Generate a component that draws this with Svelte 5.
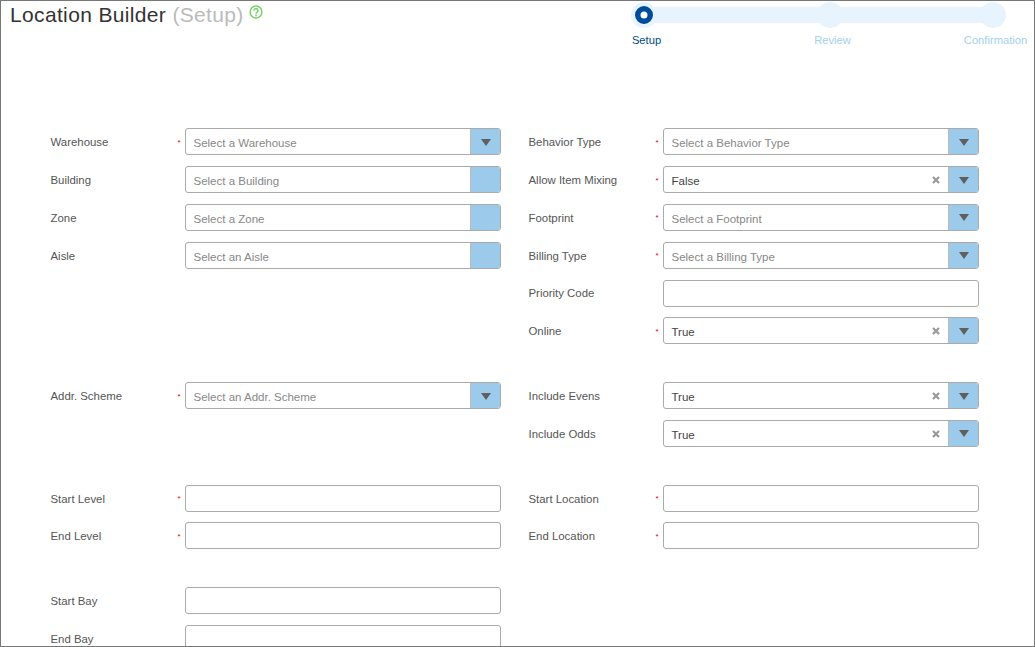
<script>
  const sections = [
    {
      left: [
        { label: 'Warehouse', req: true, type: 'select', ph: 'Select a Warehouse', arrow: true },
        { label: 'Building', type: 'select', ph: 'Select a Building' },
        { label: 'Zone', type: 'select', ph: 'Select a Zone' },
        { label: 'Aisle', type: 'select', ph: 'Select an Aisle' }
      ],
      right: [
        { label: 'Behavior Type', req: true, type: 'select', ph: 'Select a Behavior Type', arrow: true },
        { label: 'Allow Item Mixing', req: true, type: 'select', value: 'False', arrow: true },
        { label: 'Footprint', req: true, type: 'select', ph: 'Select a Footprint', arrow: true },
        { label: 'Billing Type', req: true, type: 'select', ph: 'Select a Billing Type', arrow: true },
        { label: 'Priority Code', type: 'input' },
        { label: 'Online', req: true, type: 'select', value: 'True', arrow: true }
      ]
    },
    {
      left: [{ label: 'Addr. Scheme', req: true, type: 'select', ph: 'Select an Addr. Scheme', arrow: true }],
      right: [
        { label: 'Include Evens', type: 'select', value: 'True', arrow: true },
        { label: 'Include Odds', type: 'select', value: 'True', arrow: true }
      ]
    },
    {
      left: [
        { label: 'Start Level', req: true, type: 'input' },
        { label: 'End Level', req: true, type: 'input' }
      ],
      right: [
        { label: 'Start Location', req: true, type: 'input' },
        { label: 'End Location', req: true, type: 'input' }
      ]
    },
    {
      left: [
        { label: 'Start Bay', type: 'input' },
        { label: 'End Bay', type: 'input' }
      ],
      right: []
    }
  ];
</script>

{#snippet field(f)}
  <div class="field">
    <span class="label">{f.label}</span>
    <span class="req">{f.req ? '*' : ''}</span>
    <div class="control">
      {#if f.type === 'select'}
        <span class="text" class:ph={!f.value}>{f.value ?? f.ph}</span>
        {#if f.value}
          <svg class="clear" width="8" height="8" viewBox="0 0 8 8"><path d="M1 1 7 7M7 1 1 7" /></svg>
        {/if}
        <span class="btn">
          {#if f.arrow}<span class="arrow"></span>{/if}
        </span>
      {/if}
    </div>
  </div>
{/snippet}

<div class="window">
  <header class="top">
    <h1 class="title">
      Location Builder <span class="sub">(Setup)</span>
      <svg class="help" width="14" height="14" viewBox="0 0 14 14">
        <circle cx="7" cy="7" r="5.9" />
        <path d="M5 5.6a2 2 0 1 1 3.1 1.6c-.8.5-1.1.8-1.1 1.5" />
        <circle class="dot" cx="7" cy="10.4" r=".9" />
      </svg>
    </h1>
    <div class="stepper">
      <div class="track"></div>
      <div class="step first">
        <span class="node">
          <svg class="ring" width="18" height="18" viewBox="0 0 18 18"><circle cx="9" cy="9" r="6.25" /></svg>
        </span>
        <span class="name active">Setup</span>
      </div>
      <div class="step second">
        <span class="node"></span>
        <span class="name">Review</span>
      </div>
      <div class="step third">
        <span class="node"></span>
        <span class="name">Confirmation</span>
      </div>
    </div>
  </header>

  <main class="form">
    {#each sections as s}
      <section class="section">
        <div class="col">
          {#each s.left as f}{@render field(f)}{/each}
        </div>
        <div class="col">
          {#each s.right as f}{@render field(f)}{/each}
        </div>
      </section>
    {/each}
  </main>
</div>

<style>
  :global(body) {
    margin: 0;
    background: #fff;
    font-family: "Liberation Sans", Arial, sans-serif;
  }
  .window {
    box-sizing: border-box;
    width: 1035px;
    height: 647px;
    border: 1px solid #777;
    overflow: hidden;
    background: #fff;
  }
  .top {
    display: flex;
    justify-content: space-between;
    align-items: flex-start;
    height: 127.32px;
    padding: 0 0 0 9px;
    box-sizing: border-box;
  }
  .title {
    margin: 1px 0 0;
    font-size: 21px;
    line-height: 26px;
    font-weight: 400;
    color: #333;
    letter-spacing: 0.35px;
    white-space: nowrap;
  }
  .sub {
    color: #bbb;
  }
  .help {
    vertical-align: 3px;
    margin-left: -1px;
    fill: none;
    stroke: #7ad06a;
    stroke-width: 1.5;
  }
  .help .dot {
    fill: #7ad06a;
    stroke: none;
  }
  .stepper {
    position: relative;
    display: grid;
    grid-template-columns: 186px 163px 26px;
    margin-right: 28px;
  }
  .track {
    position: absolute;
    left: 13px;
    right: 13px;
    top: 6px;
    height: 16px;
    background: #e8f4fd;
  }
  .step {
    position: relative;
    width: 26px;
    display: flex;
    flex-direction: column;
    align-items: center;
  }
  .node {
    display: flex;
    align-items: center;
    justify-content: center;
    width: 26px;
    height: 26px;
    margin-top: 1px;
    border-radius: 50%;
    background: #e8f4fd;
  }
  .ring {
    fill: #fff;
    stroke: #004b9b;
    stroke-width: 5.5;
  }
  .name {
    margin-top: 5px;
    padding-left: 5px;
    font-size: 11.2px;
    line-height: 14px;
    color: #a3cff0;
    white-space: nowrap;
  }
  .name.active {
    color: #004b87;
  }
  .form {
    display: flex;
    flex-direction: column;
    gap: 37.765px;
    padding-left: 49.5px;
  }
  .section {
    display: grid;
    grid-template-columns: 451px 451px;
    gap: 27px;
  }
  .col {
    display: flex;
    flex-direction: column;
    gap: 10.8px;
  }
  .field {
    display: flex;
    align-items: center;
    height: 27px;
  }
  .label {
    width: 125.5px;
    font-size: 11.4px;
    padding-top: 0.88px;
    color: #555;
    white-space: nowrap;
  }
  .req {
    width: 9px;
    padding: 2px 0 0 1.5px;
    box-sizing: border-box;
    color: #e00;
    font-size: 8px;
    line-height: 10px;
  }
  .control {
    box-sizing: border-box;
    display: flex;
    align-items: center;
    width: 316px;
    height: 27px;
    border: 1px solid #aaa;
    border-radius: 3px;
    background: #fff;
    overflow: hidden;
  }
  .text {
    flex: 1;
    padding-left: 7.5px;
    font-size: 11.5px;
    color: #444;
    margin-top: 3px;
    white-space: nowrap;
  }
  .text.ph {
    color: #888;
  }
  .clear {
    margin-right: 8px;
    margin-top: 1px;
    fill: none;
    stroke: #999;
    stroke-width: 2.2;
  }
  .btn {
    display: flex;
    align-items: center;
    justify-content: center;
    width: 29px;
    height: 100%;
    border-left: 1px solid #bbb;
    background: #9bcaeb;
  }
  .arrow {
    width: 0;
    height: 0;
    border-left: 5px solid transparent;
    border-right: 5px solid transparent;
    border-top: 7px solid #5f5f5f;
    margin-top: 1px;
  }
</style>
